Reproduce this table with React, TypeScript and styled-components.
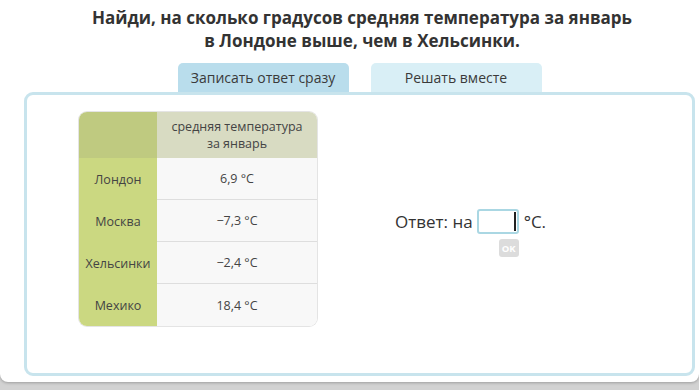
import React from "react";
import styled, { createGlobalStyle } from "styled-components";

const GlobalStyle = createGlobalStyle`
  html, body { margin: 0; padding: 0; }
  body {
    background: #d2d2d2;
    font-family: "Open Sans", "Noto Sans", sans-serif;
    color: #333;
    width: 699px;
    height: 390px;
    overflow: hidden;
  }
`;

const Card = styled.div`
  width: 699px;
  height: 382px;
  box-sizing: border-box;
  background: #fff;
  border-radius: 0 0 8px 8px;
  box-shadow: 0 1px 3px rgba(0, 0, 0, 0.25);
  padding: 6px 4px 0 24px;
  display: flex;
  flex-direction: column;
  align-items: stretch;
`;

const Title = styled.h1`
  margin: 0 0 0 5px;
  font-size: 17px;
  font-weight: 700;
  line-height: 23px;
  text-align: center;
  color: #333;
  white-space: nowrap;
`;

const Tabs = styled.div`
  display: flex;
  justify-content: center;
  gap: 22px;
  margin-top: 11px;
`;

const Tab = styled.div<{ $active?: boolean }>`
  width: 171px;
  height: 29px;
  box-sizing: border-box;
  border-radius: 5px 5px 0 0;
  background: ${(p) => (p.$active ? "#b9ddec" : "#d9eff6")};
  display: flex;
  align-items: center;
  justify-content: center;
  font-size: 14px;
  color: #3a3a3a;
`;

const Panel = styled.div`
  width: 671px;
  height: 284px;
  box-sizing: border-box;
  border: 3px solid #c8e4ed;
  border-radius: 9px;
  padding: 17px 0 0 52px;
  display: flex;
  align-items: flex-start;
`;

const Table = styled.div`
  display: grid;
  grid-template-columns: 78px 160px;
  grid-template-rows: 46px repeat(4, 42px);
  border-radius: 8px;
  overflow: hidden;
  box-shadow: 0 0 0 1px #e4e4e4;
  font-size: 12.5px;
  color: #444;
`;

const Cell = styled.div<{ $kind: "corner" | "head" | "city" | "value"; $last?: boolean }>`
  display: flex;
  align-items: center;
  justify-content: center;
  text-align: center;
  line-height: 17px;
  background: ${(p) =>
    p.$kind === "corner"
      ? "#bfca80"
      : p.$kind === "head"
      ? "#d8dbc2"
      : p.$kind === "city"
      ? "#cbd881"
      : "#f8f8f8"};
  border-bottom: ${(p) =>
    p.$kind === "value" && !p.$last ? "1px solid #dedede" : "none"};
`;

const Answer = styled.div`
  margin: 97px 0 0 78px;
  display: flex;
  align-items: flex-start;
  font-size: 17px;
  color: #333;
`;

const Label = styled.span`
  line-height: 25px;
  margin-right: 4px;
`;

const InputGroup = styled.div`
  display: flex;
  flex-direction: column;
  align-items: flex-end;
  gap: 5px;
`;

const InputBox = styled.div`
  width: 42px;
  height: 25px;
  box-sizing: border-box;
  border: 2px solid #aad7e3;
  border-radius: 3px;
  background: #fff;
  display: flex;
  align-items: center;
  justify-content: flex-end;
  padding-right: 1px;
`;

const Caret = styled.span`
  width: 1.5px;
  height: 19px;
  background: #222;
`;

const OkButton = styled.div`
  width: 20px;
  height: 18px;
  border-radius: 3px;
  background: #dcdcdc;
  color: #fff;
  font-size: 9.5px;
  font-weight: 700;
  display: flex;
  align-items: center;
  justify-content: center;
`;

const Unit = styled.span`
  line-height: 25px;
  margin-left: 5px;
`;

const rows = [
  ["Лондон", "6,9 °C"],
  ["Москва", "−7,3 °C"],
  ["Хельсинки", "−2,4 °C"],
  ["Мехико", "18,4 °C"],
];

export default function App() {
  return (
    <>
      <GlobalStyle />
      <Card>
        <Title>
          Найди, на сколько градусов средняя температура за январь
          <br />в Лондоне выше, чем в Хельсинки.
        </Title>
        <Tabs>
          <Tab $active>Записать ответ сразу</Tab>
          <Tab>Решать вместе</Tab>
        </Tabs>
        <Panel>
          <Table>
            <Cell $kind="corner" />
            <Cell $kind="head">
              средняя температура
              <br />
              за январь
            </Cell>
            {rows.map(([city, val], i) => (
              <React.Fragment key={city}>
                <Cell $kind="city">{city}</Cell>
                <Cell $kind="value" $last={i === rows.length - 1}>
                  {val}
                </Cell>
              </React.Fragment>
            ))}
          </Table>
          <Answer>
            <Label>Ответ: на</Label>
            <InputGroup>
              <InputBox>
                <Caret />
              </InputBox>
              <OkButton>OK</OkButton>
            </InputGroup>
            <Unit>°C.</Unit>
          </Answer>
        </Panel>
      </Card>
    </>
  );
}
